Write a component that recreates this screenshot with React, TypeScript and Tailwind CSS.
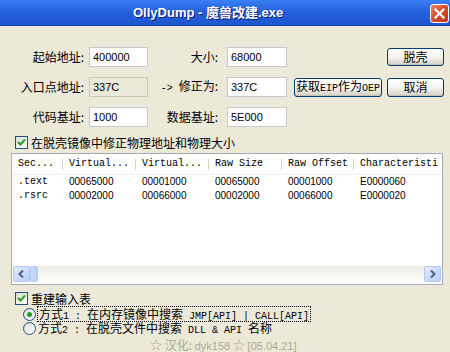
import React from "react";

const CJK = { fontFamily: '"Noto Sans CJK SC", "Liberation Sans", sans-serif' };
const MONO = { fontFamily: '"Liberation Mono", "Noto Sans CJK SC", monospace' };
const SANS = { fontFamily: '"Liberation Sans", "Noto Sans CJK SC", sans-serif' };

function M({ children }: { children: React.ReactNode }) {
  return (
    <span className="text-[10px] whitespace-pre" style={MONO}>
      {children}
    </span>
  );
}

function Input({ value, disabled, w = 59 }: { value: string; disabled?: boolean; w?: number }) {
  return (
    <div
      className={
        "h-[20px] flex items-center pl-[3px] text-[11px] text-black border " +
        (disabled ? "bg-[#ECE9D8] border-[#C9C7BA]" : "bg-white border-[#C8C8C8]")
      }
      style={{ ...SANS, width: w }}
    >
      {value}
    </div>
  );
}

function Btn({ children, w, h = 19 }: { children: React.ReactNode; w: number; h?: number }) {
  return (
    <div
      className="flex items-center justify-center rounded-[3px] border border-[#003C74] bg-gradient-to-b from-[#FFFFFF] via-[#F4F4F0] to-[#D6D0C5] text-[12px] text-black leading-[14px] shadow-[inset_0_-1px_0_#C5C1B4]"
      style={{ ...CJK, width: w, height: h }}
    >
      <span className="whitespace-nowrap">{children}</span>
    </div>
  );
}

function Check() {
  return (
    <div className="w-[13px] h-[13px] shrink-0 border border-[#1C5180] bg-gradient-to-br from-[#DCDCD7] to-[#FFFFFF] flex items-center justify-center">
      <svg width="9" height="9" viewBox="0 0 9 9">
        <path d="M1 4 L3.5 6.5 L8 1.5" stroke="#21A121" strokeWidth="2" fill="none" />
      </svg>
    </div>
  );
}

function Radio({ on }: { on?: boolean }) {
  return (
    <div className="w-[13px] h-[13px] shrink-0 rounded-full border border-[#1C5180] bg-gradient-to-br from-[#DCDCD7] to-[#FFFFFF] flex items-center justify-center">
      {on && <div className="w-[5px] h-[5px] rounded-full bg-[#21A121]" />}
    </div>
  );
}

const cols = [51, 73, 73, 73, 72, 88];
const headers = ["Sec...", "Virtual...", "Virtual...", "Raw Size", "Raw Offset", "Characteristi"];
const rows = [
  [".text", "00065000", "00001000", "00065000", "00001000", "E0000060"],
  [".rsrc", "00002000", "00066000", "00002000", "00066000", "E0000020"],
];

export default function App() {
  return (
    <div className="w-[450px] h-[352px] bg-[#ECE9D8] overflow-hidden relative text-black leading-[14px]" style={CJK}>
      {/* Title bar */}
      <div className="h-[26px] bg-gradient-to-b from-[#3A80F3] via-[#245EDB] to-[#1E56CF] border-b border-[#1941A5] flex items-center relative">
        <div
          className="absolute left-[133px] top-[5px] text-white font-bold text-[13px] leading-[16px] whitespace-nowrap"
          style={{ ...SANS, textShadow: "1px 1px 0 #0A1E6E" }}
        >
          OllyDump - 魔兽改建.exe
        </div>
        <div className="absolute left-[430px] top-[4px] w-[19px] h-[19px] rounded-[3px] border border-white bg-gradient-to-br from-[#E8866A] via-[#D74A2A] to-[#B8391E] flex items-center justify-center">
          <svg width="11" height="11" viewBox="0 0 11 11">
            <path d="M1.5 1.5 L9.5 9.5 M9.5 1.5 L1.5 9.5" stroke="white" strokeWidth="2.2" strokeLinecap="square" />
          </svg>
        </div>
      </div>

      {/* Fields */}
      <div className="pt-[21px] flex flex-col gap-[10px] text-[12px]">
        <div className="flex items-center h-[20px]">
          <div className="w-[84px] text-right">起始地址:</div>
          <div className="ml-[5px]">
            <Input value="400000" />
          </div>
          <div className="w-[70px] text-right">大小:</div>
          <div className="ml-[9px]">
            <Input value="68000" w={60} />
          </div>
          <div className="ml-[100px]">
            <Btn w={57} h={18}>脱壳</Btn>
          </div>
        </div>
        <div className="flex items-center h-[20px]">
          <div className="w-[84px] text-right">入口点地址:</div>
          <div className="ml-[5px]">
            <Input value="337C" disabled />
          </div>
          <div className="w-[70px] text-right">
            <M>{"-> "}</M>修正为:
          </div>
          <div className="ml-[9px]">
            <Input value="337C" w={60} />
          </div>
          <div className="ml-[7px]">
            <Btn w={88}>
              获取<M>EIP</M>作为<M>OEP</M>
            </Btn>
          </div>
          <div className="ml-[5px]">
            <Btn w={57}>取消</Btn>
          </div>
        </div>
        <div className="flex items-center h-[20px]">
          <div className="w-[84px] text-right">代码基址:</div>
          <div className="ml-[5px]">
            <Input value="1000" />
          </div>
          <div className="w-[70px] text-right">数据基址:</div>
          <div className="ml-[9px]">
            <Input value="5E000" w={60} />
          </div>
        </div>
      </div>

      <div className="flex items-center mt-[9px] ml-[15px] h-[13px] gap-[3px] text-[12px]">
        <Check />
        <span>在脱壳镜像中修正物理地址和物理大小</span>
      </div>

      {/* List view */}
      <div className="ml-[11px] mt-[4px] w-[432px] h-[132px] border border-[#A5ACB5] bg-white flex flex-col">
        <div className="flex h-[21px] items-center border-b border-[#F0F0EA]">
          {headers.map((h, i) => (
            <div
              key={i}
              className="h-full flex items-center pl-[6px] overflow-hidden whitespace-nowrap relative shrink-0"
              style={{ width: cols[i] }}
            >
              <M>{h}</M>
              {i < headers.length - 1 && (
                <div className="absolute right-0 top-[5px] h-[11px] w-px bg-[#D6D2C2]" />
              )}
            </div>
          ))}
        </div>
        <div className="flex flex-col">
          {rows.map((r, ri) => (
            <div key={ri} className="flex h-[14px] items-center">
              {r.map((c, ci) => (
                <div
                  key={ci}
                  className="pl-[6px] overflow-hidden whitespace-nowrap shrink-0 text-[10px]"
                  style={{ width: cols[ci], ...(ci === 0 ? MONO : SANS) }}
                >
                  {c}
                </div>
              ))}
            </div>
          ))}
        </div>
        <div className="flex-1" />
        {/* horizontal scrollbar */}
        <div className="h-[17px] mb-[1px] mx-[1px] flex bg-gradient-to-b from-[#EEEDE5] to-[#FEFEFB]">
          <div className="w-[17px] h-[16px] rounded-[2px] border border-[#B4C8F6] bg-gradient-to-br from-[#E3EBFD] to-[#B9CEF7] flex items-center justify-center">
            <svg width="7" height="8" viewBox="0 0 7 8">
              <path d="M5 0.5 L1.5 4 L5 7.5" stroke="#4D6185" strokeWidth="2" fill="none" />
            </svg>
          </div>
          <div className="w-[8px] h-[16px] rounded-[2px] border border-[#B4C8F6] bg-gradient-to-r from-[#CADAFC] to-[#BCD0F8]" />
          <div className="flex-1" />
          <div className="w-[17px] h-[16px] rounded-[2px] border border-[#B4C8F6] bg-gradient-to-br from-[#E3EBFD] to-[#B9CEF7] flex items-center justify-center">
            <svg width="7" height="8" viewBox="0 0 7 8">
              <path d="M2 0.5 L5.5 4 L2 7.5" stroke="#4D6185" strokeWidth="2" fill="none" />
            </svg>
          </div>
        </div>
      </div>

      {/* Bottom options */}
      <div className="flex items-center mt-[7px] ml-[15px] h-[13px] gap-[3px] text-[12px]">
        <Check />
        <span>重建输入表</span>
      </div>
      <div className="flex items-center mt-[1px] ml-[23px] h-[16px] gap-[1px] text-[12px]">
        <Radio on />
        <span className="border border-dotted border-black px-[1px] h-[16px] leading-[14px] whitespace-nowrap">
          方式<M>{"1 : "}</M>在内存镜像中搜索<M>{" JMP[API] | CALL[API]"}</M>
        </span>
      </div>
      <div className="flex items-center ml-[23px] h-[13px] gap-[2px] text-[12px]">
        <Radio />
        <span className="whitespace-nowrap leading-[13px]">
          方式<M>{"2 : "}</M>在脱壳文件中搜索<M>{" DLL & API "}</M>名称
        </span>
      </div>
      <div className="ml-[150px] mt-[3px] text-[12px] leading-[13px] text-[#ACA899] whitespace-nowrap">
        ☆ 汉化: <span className="text-[11px]" style={SANS}>dyk158</span> ☆ <span className="text-[11px]" style={SANS}>[05.04.21]</span>
      </div>
    </div>
  );
}
